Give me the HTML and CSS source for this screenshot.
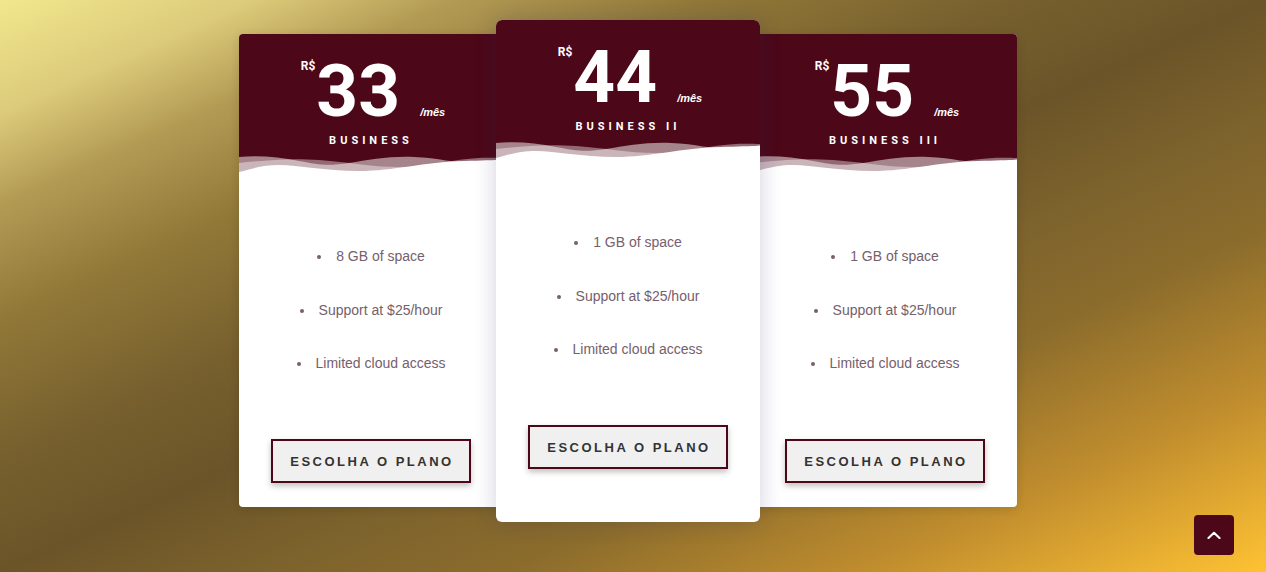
FILE: index.html
```html
<!DOCTYPE html>
<html lang="pt-BR">
<head>
<meta charset="utf-8">
<title>Planos</title>
<link rel="stylesheet" href="styles.css">
</head>
<body>
<main class="plans">
  <div class="card">
    <div class="head">
      <div class="price"><span class="cur">R$</span><span class="amount">33</span><span class="per">/mês</span></div>
      <div class="name">BUSINESS</div>
    </div>
    <svg class="wave" viewBox="0 0 264 24" preserveAspectRatio="none">
      <path fill="#fff" fill-opacity="0.5" d="M0 3 C20 1 40 3 60 7 C80 11 90 12 110 9 C130 6 150 2 175 3 C200 4 215 9 235 9 C250 9 258 6 264 5 V24 H0 Z"/>
      <path fill="#fff" fill-opacity="0.4" d="M0 9 C30 6 50 4 80 6 C110 8 130 13 160 13 C190 13 215 5 240 4 C252 3.5 258 4 264 4 V24 H0 Z"/>
      <path fill="#fff" d="M0 18 C15 14 25 11 40 11 C60 11 85 17 120 17 C155 17 185 8 225 7 C242 6.5 255 6 264 6 V24 H0 Z"/>
    </svg>
    <div class="body">
      <ul class="features">
        <li>8 GB of space</li>
        <li>Support at $25/hour</li>
        <li>Limited cloud access</li>
      </ul>
      <button class="choose">ESCOLHA O PLANO</button>
    </div>
  </div>
  <div class="card featured">
    <div class="head">
      <div class="price"><span class="cur">R$</span><span class="amount">44</span><span class="per">/mês</span></div>
      <div class="name">BUSINESS II</div>
    </div>
    <svg class="wave" viewBox="0 0 264 24" preserveAspectRatio="none">
      <path fill="#fff" fill-opacity="0.5" d="M0 3 C20 1 40 3 60 7 C80 11 90 12 110 9 C130 6 150 2 175 3 C200 4 215 9 235 9 C250 9 258 6 264 5 V24 H0 Z"/>
      <path fill="#fff" fill-opacity="0.4" d="M0 9 C30 6 50 4 80 6 C110 8 130 13 160 13 C190 13 215 5 240 4 C252 3.5 258 4 264 4 V24 H0 Z"/>
      <path fill="#fff" d="M0 18 C15 14 25 11 40 11 C60 11 85 17 120 17 C155 17 185 8 225 7 C242 6.5 255 6 264 6 V24 H0 Z"/>
    </svg>
    <div class="body">
      <ul class="features">
        <li>1 GB of space</li>
        <li>Support at $25/hour</li>
        <li>Limited cloud access</li>
      </ul>
      <button class="choose">ESCOLHA O PLANO</button>
    </div>
  </div>
  <div class="card">
    <div class="head">
      <div class="price"><span class="cur">R$</span><span class="amount">55</span><span class="per">/mês</span></div>
      <div class="name">BUSINESS III</div>
    </div>
    <svg class="wave" viewBox="0 0 264 24" preserveAspectRatio="none">
      <path fill="#fff" fill-opacity="0.5" d="M0 3 C20 1 40 3 60 7 C80 11 90 12 110 9 C130 6 150 2 175 3 C200 4 215 9 235 9 C250 9 258 6 264 5 V24 H0 Z"/>
      <path fill="#fff" fill-opacity="0.4" d="M0 9 C30 6 50 4 80 6 C110 8 130 13 160 13 C190 13 215 5 240 4 C252 3.5 258 4 264 4 V24 H0 Z"/>
      <path fill="#fff" d="M0 18 C15 14 25 11 40 11 C60 11 85 17 120 17 C155 17 185 8 225 7 C242 6.5 255 6 264 6 V24 H0 Z"/>
    </svg>
    <div class="body">
      <ul class="features">
        <li>1 GB of space</li>
        <li>Support at $25/hour</li>
        <li>Limited cloud access</li>
      </ul>
      <button class="choose">ESCOLHA O PLANO</button>
    </div>
  </div>
</main>
<a class="to-top" href="#" aria-label="Voltar ao topo">
  <svg width="14" height="8" viewBox="0 0 14 8"><polyline points="1.5,7 7,1.8 12.5,7" fill="none" stroke="#fff" stroke-width="2.2" stroke-linecap="round" stroke-linejoin="round"/></svg>
</a>
</body>
</html>
```
FILE: styles.css
```css
html, body {
  margin: 0;
  height: 100%;
}
body {
  background: linear-gradient(to bottom right,
    #f1e78e 0%, #dccb7a 10%, #b39a54 18%, #917838 28%, #77602e 40%,
    #6b5428 50%, #7c622c 60%, #8b6c2c 70%, #c08d2e 84%, #ffc233 100%);
  font-family: "Liberation Sans", Arial, sans-serif;
  overflow: hidden;
}
.plans {
  display: flex;
  justify-content: center;
  align-items: flex-start;
  padding: 20px 10px 0 0;
}
.card {
  width: 264px;
  margin-top: 14px;
  background: #fff;
  border-radius: 4px;
  overflow: hidden;
  display: flex;
  flex-direction: column;
  box-shadow: 0 2px 10px rgba(30, 20, 10, 0.15);
  position: relative;
  z-index: 1;
}
.card.featured {
  margin: 0 -7px;
  z-index: 2;
  border-radius: 6px;
  box-shadow: 0 0 22px rgba(40, 40, 110, 0.22);
}
.head {
  box-sizing: border-box;
  height: 120px;
  background: #4c0818;
  color: #fff;
  padding: 20px 0 0;
  display: flex;
  flex-direction: column;
  align-items: center;
}
.price {
  display: flex;
  align-items: baseline;
  height: 74px;
  font-family: Roboto, "Liberation Sans", sans-serif;
}
.cur {
  align-self: flex-start;
  font-size: 12px;
  line-height: 12px;
  font-weight: 700;
  margin-top: 6px;
  margin-right: 1px;
  margin-left: 4px;
}
.amount {
  font-size: 73px;
  line-height: 74px;
  font-weight: 700;
}
.per {
  font-family: "Liberation Sans", Arial, sans-serif;
  font-size: 11px;
  font-weight: 700;
  font-style: italic;
  margin-left: 20px;
}
.name {
  margin-top: 6px;
  font-family: Roboto, "Liberation Sans", sans-serif;
  font-size: 11px;
  line-height: 14px;
  font-weight: 700;
  letter-spacing: 4px;
}
.wave {
  display: block;
  width: 100%;
  height: 24px;
  background: #4c0818;
}
.body {
  padding: 68px 0 24px;
  display: flex;
  flex-direction: column;
  align-items: center;
}
.featured .body {
  padding-bottom: 53px;
}
.features {
  margin: 0;
  padding: 0;
  list-style: disc inside;
  text-align: center;
  color: #76606c;
  font-size: 14px;
  line-height: 20px;
}
.features li + li {
  margin-top: 33.5px;
}
.choose {
  margin-top: 66px;
  width: 200px;
  height: 44px;
  border: 2px solid #4c0818;
  background: #f0f0f0;
  color: #333;
  font-family: "Liberation Sans", Arial, sans-serif;
  font-size: 13px;
  font-weight: 700;
  letter-spacing: 2.5px;
  padding: 0 0 0 2px;
  box-shadow: 0 3px 6px rgba(0, 0, 0, 0.25);
  cursor: pointer;
}
.to-top {
  position: fixed;
  right: 32px;
  bottom: 17px;
  width: 40px;
  height: 40px;
  border-radius: 4px;
  background: #4c0818;
  display: flex;
  align-items: center;
  justify-content: center;
}
```
